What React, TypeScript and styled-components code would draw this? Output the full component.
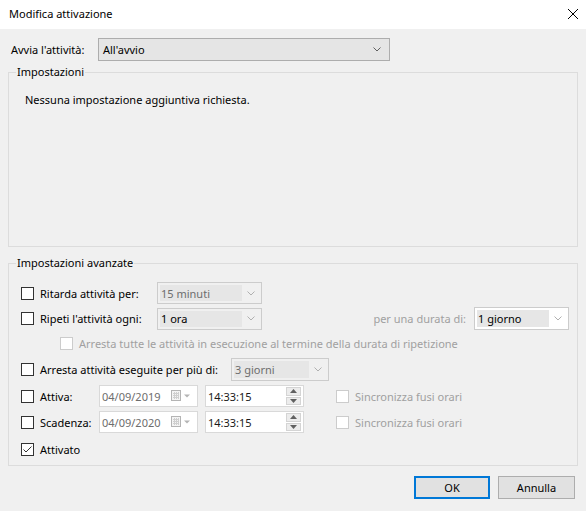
import styled, { createGlobalStyle } from "styled-components";

const GlobalStyle = createGlobalStyle`
  html, body {
    margin: 0;
    padding: 0;
    background: #f0f0f0;
  }
  body {
    font-family: "Noto Sans", "Liberation Sans", sans-serif;
    font-size: 11px;
    color: #000;
  }
`;

const Dialog = styled.div`
  width: 586px;
  height: 511px;
  display: flex;
  flex-direction: column;
  background: #f0f0f0;
  overflow: hidden;
`;

const TitleBar = styled.div`
  height: 29px;
  flex-shrink: 0;
  background: #fff;
  display: flex;
  align-items: center;
  justify-content: space-between;
  padding: 0 8px 2px 9px;
  box-sizing: border-box;
`;

const Title = styled.span`
  line-height: 16px;
`;

const Body = styled.div`
  display: flex;
  flex-direction: column;
  padding: 9px 8px 0 8px;
`;

const StartRow = styled.div`
  display: flex;
  align-items: center;
  height: 23px;
  padding-left: 3px;
`;

const StartLabel = styled.span`
  width: 87px;
`;

const Select = styled.div`
  width: 292px;
  height: 23px;
  box-sizing: border-box;
  border: 1px solid #adadad;
  background: #e5e5e5;
  display: flex;
  align-items: center;
  justify-content: space-between;
  padding: 0 8px 0 4px;
`;

const Group = styled.fieldset<{ $height: number; $mt: number }>`
  margin: ${(p) => p.$mt}px 0 0 0;
  padding: 0;
  min-width: 0;
  border: 1px solid #dcdcdc;
  height: ${(p) => p.$height}px;
  box-sizing: border-box;
`;

const Legend = styled.legend`
  margin-left: 7px;
  padding: 0 1px;
  line-height: 16px;
`;

const GroupContent = styled.div<{ $pad: string }>`
  display: flex;
  flex-direction: column;
  padding: ${(p) => p.$pad};
`;

const Row = styled.div<{ $h: number; $mt?: number; $indent?: number }>`
  display: flex;
  align-items: center;
  height: ${(p) => p.$h}px;
  margin-top: ${(p) => p.$mt ?? 0}px;
  padding-left: ${(p) => p.$indent ?? 0}px;
`;

const Field = styled.label<{ $w?: number; $ml?: number }>`
  display: flex;
  align-items: center;
  gap: 6px;
  width: ${(p) => (p.$w ? `${p.$w}px` : "auto")};
  margin-left: ${(p) => p.$ml ?? 0}px;
  flex-shrink: 0;
`;

const Box = styled.span<{ $disabled?: boolean }>`
  width: 13px;
  height: 13px;
  box-sizing: border-box;
  border: 1px solid ${(p) => (p.$disabled ? "#cccccc" : "#333333")};
  background: #fff;
  display: inline-flex;
  flex-shrink: 0;
`;

const FieldText = styled.span<{ $disabled?: boolean }>`
  color: ${(p) => (p.$disabled ? "#a0a0a0" : "#000")};
  white-space: nowrap;
`;

const Combo = styled.div<{ $w: number; $h: number; $white?: boolean }>`
  width: ${(p) => p.$w}px;
  height: ${(p) => p.$h}px;
  box-sizing: border-box;
  border: 1px solid #cccccc;
  background: ${(p) => (p.$white ? "#fff" : "#f0f0f0")};
  display: flex;
  align-items: stretch;
  padding: 2px;
  flex-shrink: 0;
`;

const ComboText = styled.span<{ $disabled?: boolean }>`
  flex: 1;
  background: #e6e6e6;
  color: ${(p) => (p.$disabled ? "#6d6d6d" : "#000")};
  display: flex;
  align-items: center;
  padding-left: 1px;
  white-space: nowrap;
`;

const ComboArrow = styled.span`
  width: 17px;
  display: flex;
  align-items: center;
  justify-content: center;
`;

const Muted = styled.span`
  margin-left: auto;
  margin-right: 8px;
  color: #a0a0a0;
  white-space: nowrap;
`;

const DateBox = styled.div`
  width: 99px;
  height: 22px;
  box-sizing: border-box;
  border: 1px solid #d9d9d9;
  background: #fff;
  display: flex;
  align-items: center;
  padding: 0 6px 0 2px;
  color: #6d6d6d;
  flex-shrink: 0;
`;

const DateText = styled.span`
  flex: 1;
`;

const TimeBox = styled.div`
  width: 99px;
  height: 22px;
  margin-left: 7px;
  box-sizing: border-box;
  border: 1px solid #d9d9d9;
  background: #fff;
  display: flex;
  align-items: center;
  padding: 0 2px 0 2px;
  color: #1a1a1a;
  flex-shrink: 0;
`;

const Spinner = styled.div`
  width: 15px;
  height: 18px;
  display: flex;
  flex-direction: column;
  gap: 1px;
`;

const SpinButton = styled.span`
  flex: 1;
  border: 1px solid #d4d4d4;
  background: #ececec;
  display: flex;
  align-items: center;
  justify-content: center;
`;

const Footer = styled.div`
  display: flex;
  justify-content: flex-end;
  gap: 8px;
  margin-top: 10px;
  padding-right: 3px;
`;

const Button = styled.button<{ $primary?: boolean }>`
  width: ${(p) => (p.$primary ? 76 : 77)}px;
  height: 23px;
  box-sizing: border-box;
  border: ${(p) => (p.$primary ? "2px solid #0078d7" : "1px solid #adadad")};
  background: #e1e1e1;
  font: inherit;
  color: #000;
  padding: 0;
`;

const Chevron = ({ color }: { color: string }) => (
  <svg width="8" height="5" viewBox="0 0 8 5">
    <path d="M0.5 0.5 L4 4 L7.5 0.5" fill="none" stroke={color} strokeWidth="1" />
  </svg>
);

const CheckBox = ({ checked, disabled }: { checked?: boolean; disabled?: boolean }) => (
  <Box $disabled={disabled}>
    {checked && (
      <svg width="11" height="11" viewBox="0 0 11 11">
        <path d="M1.5 5.5 L4 8 L9.5 2.5" fill="none" stroke="#333" strokeWidth="1" />
      </svg>
    )}
  </Box>
);

const CalendarIcon = () => (
  <svg width="20" height="12" viewBox="0 0 20 12">
    <rect x="0.5" y="0.5" width="9" height="10" fill="#f4f4f4" stroke="#b4b4b4" />
    <path d="M2 3.5h6M2 5.5h6M2 7.5h6M3.5 2v7M5.5 2v7M7.5 2v7" stroke="#cfcfcf" strokeWidth="1" />
    <path d="M13 4.5 L19 4.5 L16 7.5 Z" fill="#b4b4b4" />
  </svg>
);

const Tri = ({ up }: { up?: boolean }) => (
  <svg width="7" height="4" viewBox="0 0 7 4">
    <path d={up ? "M0 4 L3.5 0 L7 4 Z" : "M0 0 L3.5 4 L7 0 Z"} fill="#606060" />
  </svg>
);

const ComboField = ({
  w,
  h,
  text,
  white,
  disabled,
}: {
  w: number;
  h: number;
  text: string;
  white?: boolean;
  disabled?: boolean;
}) => (
  <Combo $w={w} $h={h} $white={white}>
    <ComboText $disabled={disabled}>{text}</ComboText>
    <ComboArrow>
      <Chevron color="#b0b0b0" />
    </ComboArrow>
  </Combo>
);

const DateTime = ({ date }: { date: string }) => (
  <>
    <DateBox>
      <DateText>{date}</DateText>
      <CalendarIcon />
    </DateBox>
    <TimeBox>
      <DateText>14:33:15</DateText>
      <Spinner>
        <SpinButton>
          <Tri up />
        </SpinButton>
        <SpinButton>
          <Tri />
        </SpinButton>
      </Spinner>
    </TimeBox>
  </>
);

export default function App() {
  return (
    <>
      <GlobalStyle />
      <Dialog>
        <TitleBar>
          <Title>Modifica attivazione</Title>
          <svg width="10" height="10" viewBox="0 0 10 10">
            <path d="M0 0 L10 10 M10 0 L0 10" stroke="#000" strokeWidth="1" />
          </svg>
        </TitleBar>
        <Body>
          <StartRow>
            <StartLabel>Avvia l'attività:</StartLabel>
            <Select>
              <span>All'avvio</span>
              <Chevron color="#606060" />
            </Select>
          </StartRow>

          <Group $height={183} $mt={3}>
            <Legend>Impostazioni</Legend>
            <GroupContent $pad="12px 16px">
              <span>Nessuna impostazione aggiuntiva richiesta.</span>
            </GroupContent>
          </Group>

          <Group $height={211} $mt={8}>
            <Legend>Impostazioni avanzate</Legend>
            <GroupContent $pad="11px 8px 0 12px">
              <Row $h={22}>
                <Field $w={136}>
                  <CheckBox />
                  <FieldText>Ritarda attività per:</FieldText>
                </Field>
                <ComboField w={105} h={22} text="15 minuti" disabled />
              </Row>
              <Row $h={23} $mt={3}>
                <Field $w={136}>
                  <CheckBox />
                  <FieldText>Ripeti l'attività ogni:</FieldText>
                </Field>
                <ComboField w={105} h={22} text="1 ora" />
                <Muted>per una durata di:</Muted>
                <ComboField w={95} h={23} text="1 giorno" white />
              </Row>
              <Row $h={20} $mt={3} $indent={39}>
                <Field>
                  <CheckBox disabled />
                  <FieldText $disabled>
                    Arresta tutte le attività in esecuzione al termine della durata di ripetizione
                  </FieldText>
                </Field>
              </Row>
              <Row $h={23} $mt={5}>
                <Field $w={210}>
                  <CheckBox />
                  <FieldText>Arresta attività eseguite per più di:</FieldText>
                </Field>
                <ComboField w={98} h={23} text="3 giorni" disabled />
              </Row>
              <Row $h={22} $mt={4}>
                <Field $w={78}>
                  <CheckBox />
                  <FieldText>Attiva:</FieldText>
                </Field>
                <DateTime date="04/09/2019" />
                <Field $ml={32}>
                  <CheckBox disabled />
                  <FieldText $disabled>Sincronizza fusi orari</FieldText>
                </Field>
              </Row>
              <Row $h={22} $mt={4}>
                <Field $w={78}>
                  <CheckBox />
                  <FieldText>Scadenza:</FieldText>
                </Field>
                <DateTime date="04/09/2020" />
                <Field $ml={32}>
                  <CheckBox disabled />
                  <FieldText $disabled>Sincronizza fusi orari</FieldText>
                </Field>
              </Row>
              <Row $h={18} $mt={7}>
                <Field>
                  <CheckBox checked />
                  <FieldText>Attivato</FieldText>
                </Field>
              </Row>
            </GroupContent>
          </Group>

          <Footer>
            <Button $primary>OK</Button>
            <Button>Annulla</Button>
          </Footer>
        </Body>
      </Dialog>
    </>
  );
}
